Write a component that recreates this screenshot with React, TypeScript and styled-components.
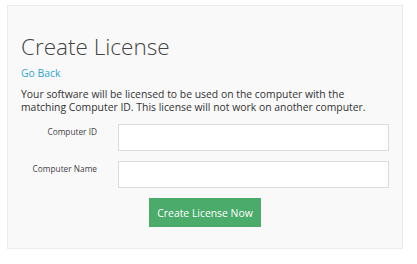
import styled, { createGlobalStyle } from "styled-components";

const Global = createGlobalStyle`
  html, body {
    margin: 0;
    padding: 0;
    background: #ffffff;
    font-family: "Open Sans", "Liberation Sans", sans-serif;
  }
`;

const Page = styled.div`
  padding: 5px 14px 14px 7px;
`;

const Panel = styled.div`
  background-color: #f9f9f9;
  border: 1px solid #ececec;
  padding: 27px 13px 21px 13px;
  width: 396px;
  box-sizing: border-box;
`;

const Title = styled.h1`
  margin: 0;
  font-size: 22.5px;
  font-weight: 300;
  color: #444;
  line-height: 28px;
`;

const BackLink = styled.a`
  display: block;
  margin-top: 6px;
  font-size: 10.4px;
  line-height: 13px;
  color: #2ea6d3;
  text-decoration: none;
`;

const Intro = styled.p`
  margin: 8px 0 0;
  font-size: 10.4px;
  line-height: 13px;
  color: #333;
`;

const Form = styled.form`
  margin-top: 10px;
  display: flex;
  flex-direction: column;
  gap: 10px;
`;

const Row = styled.div`
  display: grid;
  grid-template-columns: 76px 271px;
  column-gap: 21px;
  align-items: start;
`;

const Label = styled.label`
  text-align: right;
  font-size: 8.3px;
  line-height: 12px;
  color: #444;
  padding-top: 2px;
`;

const Field = styled.input`
  box-sizing: border-box;
  height: 27px;
  width: 100%;
  background: #fff;
  border: 1px solid #dcdcdc;
  margin: 0;
`;

const Actions = styled.div`
  display: flex;
  justify-content: center;
`;

const Submit = styled.button`
  background-color: #4aab6b;
  color: #fff;
  border: none;
  height: 29px;
  width: 112px;
  font-family: inherit;
  font-size: 10.4px;
  padding: 0;
`;

export default function App() {
  return (
    <>
      <Global />
      <Page>
        <Panel>
          <Title>Create License</Title>
          <BackLink href="#">Go Back</BackLink>
          <Intro>
            Your software will be licensed to be used on the computer with the
            matching Computer ID. This license will not work on another computer.
          </Intro>
          <Form>
            <Row>
              <Label>Computer ID</Label>
              <Field />
            </Row>
            <Row>
              <Label>Computer Name</Label>
              <Field />
            </Row>
            <Actions>
              <Submit type="button">Create License Now</Submit>
            </Actions>
          </Form>
        </Panel>
      </Page>
    </>
  );
}
